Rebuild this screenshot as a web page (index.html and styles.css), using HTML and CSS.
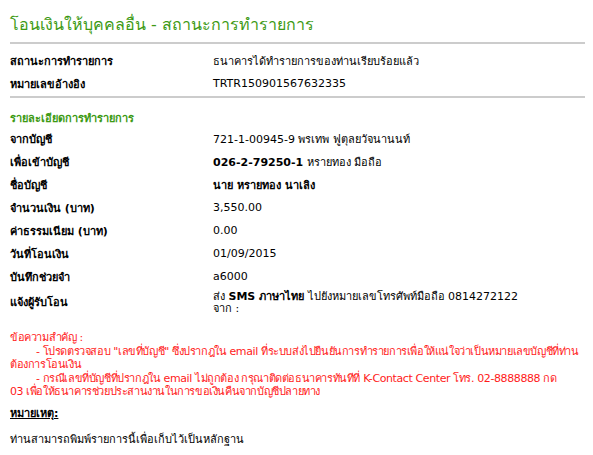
FILE: index.html
```html
<!DOCTYPE html>
<html lang="th">
<head>
    <meta charset="UTF-8">
    <title>โอนเงินให้บุคคลอื่น - สถานะการทำรายการ</title>
    <link rel="stylesheet" href="styles.css">
</head>
<body>

<h1 class="title">โอนเงินให้บุคคลอื่น - สถานะการทำรายการ</h1>

<table class="info status">
    <tr>
        <th>สถานะการทำรายการ</th>
        <td>ธนาคารได้ทำรายการของท่านเรียบร้อยแล้ว</td>
    </tr>
    <tr>
        <th>หมายเลขอ้างอิง</th>
        <td>TRTR150901567632335</td>
    </tr>
</table>

<h2 class="subtitle">รายละเอียดการทำรายการ</h2>

<table class="info detail">
    <tr>
        <th>จากบัญชี</th>
        <td>721-1-00945-9 พรเทพ ฟูตุลยวัจนานนท์</td>
    </tr>
    <tr>
        <th>เพื่อเข้าบัญชี</th>
        <td><b>026-2-79250-1</b> หรายทอง มือถือ</td>
    </tr>
    <tr>
        <th>ชื่อบัญชี</th>
        <td><b>นาย หรายทอง นาเลิง</b></td>
    </tr>
    <tr>
        <th>จำนวนเงิน (บาท)</th>
        <td>3,550.00</td>
    </tr>
    <tr>
        <th>ค่าธรรมเนียม (บาท)</th>
        <td>0.00</td>
    </tr>
    <tr>
        <th>วันที่โอนเงิน</th>
        <td>01/09/2015</td>
    </tr>
    <tr>
        <th>บันทึกช่วยจำ</th>
        <td>a6000</td>
    </tr>
    <tr class="two-line">
        <th>แจ้งผู้รับโอน</th>
        <td>ส่ง <b>SMS ภาษาไทย</b> ไปยังหมายเลขโทรศัพท์มือถือ 0814272122<br>จาก :</td>
    </tr>
</table>

<div class="warning">
    ข้อความสำคัญ :<br>
    <span class="indent">- โปรดตรวจสอบ "เลขที่บัญชี" ซึ่งปรากฎใน email ที่ระบบส่งไปยืนยันการทำรายการเพื่อให้แน่ใจว่าเป็นหมายเลขบัญชีที่ท่าน</span><br>
    ต้องการโอนเงิน<br>
    <span class="indent">- กรณีเลขที่บัญชีที่ปรากฎใน email ไม่ถูกต้อง กรุณาติดต่อธนาคารทันทีที่ K-Contact Center โทร. 02-8888888 กด</span><br>
    03 เพื่อให้ธนาคารช่วยประสานงานในการขอเงินคืนจากบัญชีปลายทาง
</div>

<p class="note-head">หมายเหตุ:</p>
<p class="note">ท่านสามารถพิมพ์รายการนี้เพื่อเก็บไว้เป็นหลักฐาน</p>

</body>
</html>
```

FILE: styles.css
```css
body {
    font-family: Tahoma, "DejaVu Sans", sans-serif;
    font-size: 11px;
    color: #000;
    margin: 0;
    padding: 8px 8px 0 10px;
    width: 575px;
}

.title {
    color: #3d9a14;
    font-size: 16px;
    font-weight: normal;
    margin: 4px 0 0 0;
    padding-bottom: 5px;
    border-bottom: 2px solid #cccccc;
}

.info {
    border-collapse: collapse;
    width: 100%;
    table-layout: fixed;
}

.info th {
    text-align: left;
    font-weight: bold;
    width: 203px;
    padding: 0;
    vertical-align: middle;
}

.info td {
    padding: 0;
}

.status {
    border-bottom: 2px solid #cccccc;
    margin-top: 7px;
}

.status tr {
    height: 20px;
}

.status tr:last-child {
    height: 26px;
}

.subtitle {
    color: #3d9a14;
    font-size: 11px;
    font-weight: bold;
    margin: 11px 0 0 0;
}

.detail tr {
    height: 23px;
}

.detail .two-line {
    height: 27px;
}

.detail .two-line td {
    line-height: 12px;
    padding-top: 2px;
}

.warning {
    color: #ff1a1a;
    line-height: 13.5px;
    margin-top: 16px;
    white-space: nowrap;
    letter-spacing: -0.4px;
}

.indent {
    padding-left: 26px;
}

.note-head {
    font-weight: bold;
    text-decoration: underline;
    margin: 5px 0 0 0;
}

.note {
    margin: 8px 0 0 0;
}
```
